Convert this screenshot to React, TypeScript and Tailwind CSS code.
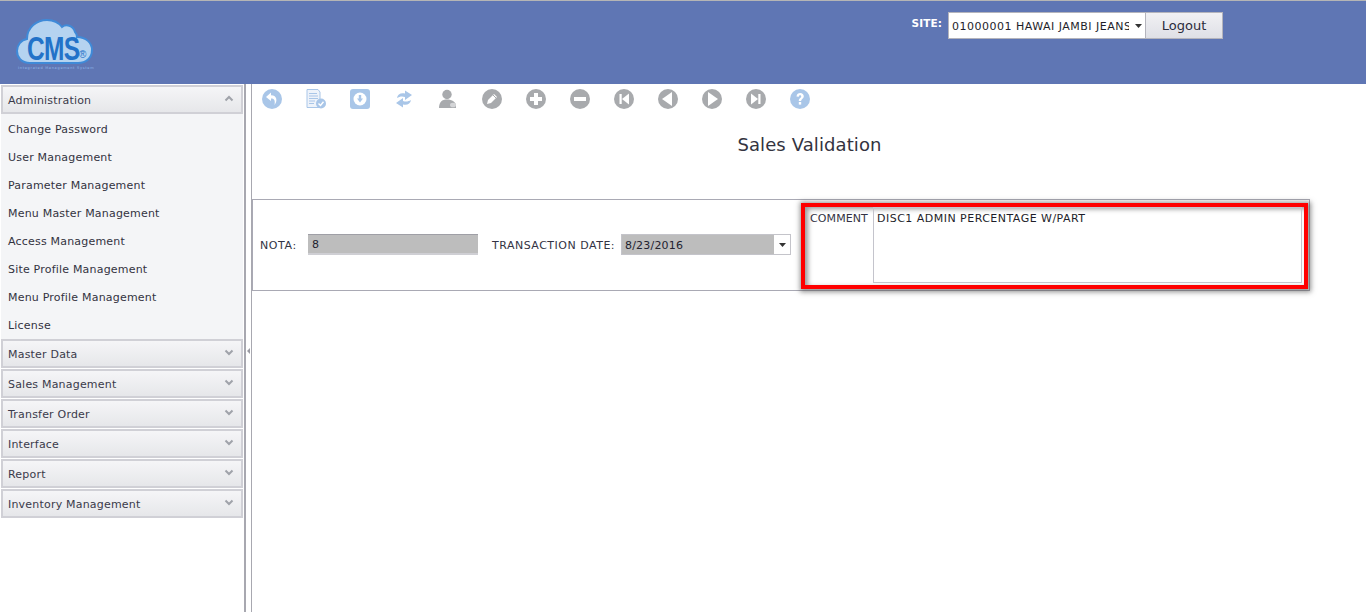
import React from 'react';

const adminItems = [
  'Change Password',
  'User Management',
  'Parameter Management',
  'Menu Master Management',
  'Access Management',
  'Site Profile Management',
  'Menu Profile Management',
  'License',
];

const otherMenus = ['Master Data', 'Sales Management', 'Transfer Order', 'Interface', 'Report', 'Inventory Management'];

const Chevron = ({ up }: { up?: boolean }) => (
  <svg width="10" height="7" viewBox="0 0 10 7" className="mb-[2px] mr-[4px]">
    <path d={up ? 'M1.5 5.5 L5 2 L8.5 5.5' : 'M1.5 1.5 L5 5 L8.5 1.5'} fill="none" stroke="#a0a3aa" strokeWidth="2" />
  </svg>
);

const AccordionHeader = ({ label, up }: { label: string; up?: boolean }) => (
  <div className="flex h-[29px] items-center justify-between border-2 border-[#d0d0d6] bg-gradient-to-b from-[#f5f5f7] to-[#e6e7ea] pl-[5px] pr-[3px] text-[11px] tracking-[0.2px] text-[#3a3a4a]">
    <span className="pt-[3px]">{label}</span>
    <Chevron up={up} />
  </div>
);

const Circle = ({ fill, children }: { fill: string; children: React.ReactNode }) => (
  <svg width="20" height="20" viewBox="0 0 20 20">
    <circle cx="10" cy="10" r="10" fill={fill} />
    {children}
  </svg>
);

const BLUE = '#a9c6e8';
const GREY = '#a8aaad';

const toolbarIcons: React.ReactNode[] = [
  <Circle fill={BLUE} key="undo">
    <path d="M9 3.5 L4 8 L9 12 V9.5 C12 9.5 13.5 11 12.5 16 C15.5 12.5 15.5 6.5 9 6.3 Z" fill="#fff" />
  </Circle>,
  <svg width="22" height="20" viewBox="0 0 22 20" key="doc">
    <path d="M2 .5 H13 L15 3 V18.5 H2 Z" fill="#eef3fa" stroke={BLUE} />
    <path d="M4 4.5 H12 M4 7 H13 M4 9.5 H13 M4 12 H10 M4 14.5 H9" stroke={BLUE} strokeWidth="1.2" />
    <circle cx="16" cy="14.5" r="5" fill={BLUE} />
    <path d="M13.5 14.5 L15.5 16.5 L18.5 12.8" fill="none" stroke="#fff" strokeWidth="1.4" />
  </svg>,
  <svg width="20" height="20" viewBox="0 0 20 20" key="save">
    <rect width="20" height="20" rx="3" fill={BLUE} />
    <circle cx="10" cy="10" r="6.5" fill="#fff" />
    <path d="M8.8 6 H11.2 V9.5 H13 L10 13.5 L7 9.5 H8.8 Z" fill={BLUE} />
  </svg>,
  <svg width="18" height="20" viewBox="0 0 18 20" key="refresh">
    <path d="M2 9 C2.5 5 6 3.5 10 4.5 V1.5 L17 6 L10 11 V8 C7 7 4.5 7.5 2 9 Z" fill={BLUE} />
    <path d="M16 11 C15.5 15 12 16.5 8 15.5 V18.5 L1 14 L8 9 V12 C11 13 13.5 12.5 16 11 Z" fill={BLUE} />
  </svg>,
  <svg width="20" height="20" viewBox="0 0 20 20" key="user">
    <circle cx="9" cy="5.5" r="4.7" fill={GREY} />
    <path d="M1 19 C1 13 4 10.5 9 10.5 C14 10.5 18 13 18 17 V19 Z" fill={GREY} />
    <ellipse cx="15" cy="16" rx="3" ry="2.3" fill="#d4d5d7" />
  </svg>,
  <Circle fill={GREY} key="edit">
    <path d="M5 15 L6 11 L12 5 L15 8 L9 14 Z" fill="#fff" />
    <path d="M11 6 L14 9" stroke={GREY} />
  </Circle>,
  <Circle fill={GREY} key="plus">
    <path d="M8 4 H12 V8 H16 V12 H12 V16 H8 V12 H4 V8 H8 Z" fill="#fff" />
  </Circle>,
  <Circle fill={GREY} key="minus">
    <rect x="4" y="8" width="12" height="4" fill="#fff" />
  </Circle>,
  <Circle fill={GREY} key="first">
    <rect x="5.5" y="5" width="2.2" height="10" fill="#fff" />
    <path d="M15 4.5 V15.5 L8 10 Z" fill="#fff" />
  </Circle>,
  <Circle fill={GREY} key="prev">
    <path d="M14 3 V17 L4 10 Z" fill="#fff" />
  </Circle>,
  <Circle fill={GREY} key="next">
    <path d="M6 3 V17 L16 10 Z" fill="#fff" />
  </Circle>,
  <Circle fill={GREY} key="last">
    <rect x="12.3" y="5" width="2.2" height="10" fill="#fff" />
    <path d="M5 4.5 V15.5 L12 10 Z" fill="#fff" />
  </Circle>,
  <Circle fill={BLUE} key="help">
    <path d="M6.5 7.5 C6.8 4.8 8.3 4 10.2 4 C12.3 4 13.8 5.3 13.8 7.2 C13.8 9.6 11.2 9.8 11.2 12 H8.8 C8.8 8.8 11.2 9 11.2 7.4 C11.2 6.6 10.8 6.2 10 6.2 C9.2 6.2 8.9 6.8 8.8 7.8 Z" fill="#fff" />
    <rect x="8.8" y="13" width="2.4" height="2.6" fill="#fff" />
  </Circle>,
];

const SmallCaret = () => (
  <svg width="7" height="4" viewBox="0 0 7 4">
    <path d="M0 0 H7 L3.5 4 Z" fill="#333" />
  </svg>
);

const Logo = () => (
  <div className="relative h-[58px] w-[80px]">
    <svg width="78" height="48" viewBox="0 0 78 48" className="absolute left-0 top-0">
      <path
        d="M14 45 C5 45 1 39 1 33 C1 27 5 22 11 21 C11 9 21 2 31 2 C38 2 43 5 46 9 C50 6 57 7 59 14 C61 16 61 18 61 19 C70 19 76 25 76 32 C76 40 70 45 62 45 Z"
        fill="#b5d3f0"
        stroke="#3f8ad8"
        strokeWidth="2"
      />
    </svg>
    <span className="absolute left-[11px] top-[13px] origin-left scale-x-[0.72] text-[34px] font-bold leading-[34px] tracking-[-1px] text-[#2272c8] [font-family:'Liberation_Sans',sans-serif]">
      CMS
    </span>
    <span className="absolute left-[63px] top-[31px] text-[10px] leading-[12px] text-[#2272c8] [font-family:'Liberation_Sans',sans-serif]">®</span>
    <span className="absolute left-[2px] top-[47px] whitespace-nowrap text-[3.5px] leading-[6px] tracking-[0.7px] text-[#8fb6e8]">
      Integrated Management System
    </span>
  </div>
);

export default function App() {
  return (
    <div className="flex h-[612px] w-[1366px] flex-col overflow-hidden bg-white text-[11px] text-[#333344] [font-family:'DejaVu_Sans',Verdana,sans-serif]">
      <header className="flex h-[84px] shrink-0 items-start justify-between border-t border-[#b5b5b5] bg-[#5f76b4] pl-[16px] pr-[143px]">
        <div className="pt-[17px]">
          <Logo />
        </div>
        <div className="flex items-start pt-[11px]">
          <span className="mr-[6px] pt-[5px] text-[10.5px] font-bold leading-[13px] tracking-[0.1px] text-white">SITE:</span>
          <div className="flex h-[27px] w-[198px] items-center justify-between border border-[#b4b4bc] bg-white pl-[3px] pr-[3px] pt-[1px] text-[#1e1e2a]">
            <span className="w-[177px] overflow-hidden whitespace-nowrap pt-[2px] tracking-[0.5px]">01000001 HAWAI JAMBI JEANS</span>
            <SmallCaret />
          </div>
          <button className="h-[27px] w-[77px] border border-[#b4b4bc] border-l-0 bg-gradient-to-b from-[#f1f1f4] to-[#dfe0e6] text-[13px] text-[#2c2c3c]">
            Logout
          </button>
        </div>
      </header>

      <div className="flex min-h-0 flex-1">
        <aside className="w-[244px] shrink-0 pl-[1px] pr-[1px] pt-[1px]">
          <AccordionHeader label="Administration" up />
          <div className="flex h-[225px] flex-col bg-[#f4f5f7] pt-[1px]">
            {adminItems.map((item) => (
              <div key={item} className="flex h-[28px] shrink-0 items-center pl-[7px] pt-[2px] tracking-[0.2px] text-[#33333f]">
                {item}
              </div>
            ))}
          </div>
          <div className="flex flex-col gap-[1px]">
            {otherMenus.map((menu) => (
              <AccordionHeader key={menu} label={menu} />
            ))}
          </div>
        </aside>

        <div className="flex w-[8px] shrink-0 items-center justify-center border-l-2 border-r border-[#a8a8b0] bg-white">
          <svg width="4" height="6" viewBox="0 0 4 6" className="mb-[-6px]">
            <path d="M3 0 V6 L0 3 Z" fill="#9a9aa2" />
          </svg>
        </div>

        <main className="min-w-0 flex-1">
          <div className="-ml-[3px] flex h-[30px] items-center">
            {toolbarIcons.map((icon, i) => (
              <div key={i} className="flex h-[20px] w-[44px] shrink-0 items-center justify-center pl-[1px]">
                {icon}
              </div>
            ))}
          </div>
          <h1 className="mt-[18px] w-[1115px] text-center text-[18px] leading-[26px] tracking-[0.1px] text-[#333340]">
            Sales Validation
          </h1>
          <div className="mt-[41px] flex h-[92px] w-[1058px] items-center border border-[#a9a9b4] pl-[7px]">
            <span className="w-[48px] shrink-0 pt-[3px] tracking-[0.6px]">NOTA:</span>
            <div className="mb-[1px] flex h-[21px] w-[170px] items-center border-t border-[#9f9fa6] border-b-2 border-b-[#cfcfd4] bg-[#bdbdbd] pl-[4px] pt-[3px] text-[#222230]">
              8
            </div>
            <span className="ml-[14px] w-[129px] shrink-0 pt-[3px] tracking-[0.5px]">TRANSACTION DATE:</span>
            <div className="mb-[1px] flex h-[21px] w-[170px] items-stretch border border-[#c4c4ca] bg-[#bdbdbd] pl-[3px] text-[#222230]">
              <span className="flex flex-1 items-center pt-[3px] tracking-[0.2px]">8/23/2016</span>
              <span className="flex w-[16px] items-center justify-center bg-white">
                <SmallCaret />
              </span>
            </div>
            <div className="ml-[10px] mt-[3px] flex h-[86px] w-[507px] shrink-0 self-start border-4 border-[#ff0000] pl-[5px] pr-[2px] shadow-[1px_1px_5px_2px_rgba(70,70,70,0.6),inset_3px_2px_5px_0px_rgba(70,70,70,0.55)]">
              <span className="w-[63px] shrink-0 pt-[5px] leading-[13px] tracking-[0.1px]">COMMENT</span>
              <div className="h-[76px] flex-1 border border-[#c4c4cc] pl-[3px] pt-[4px] leading-[13px] tracking-[0.48px] text-[#1e1e2a]">
                DISC1 ADMIN PERCENTAGE W/PART
              </div>
            </div>
          </div>
        </main>
      </div>
    </div>
  );
}
